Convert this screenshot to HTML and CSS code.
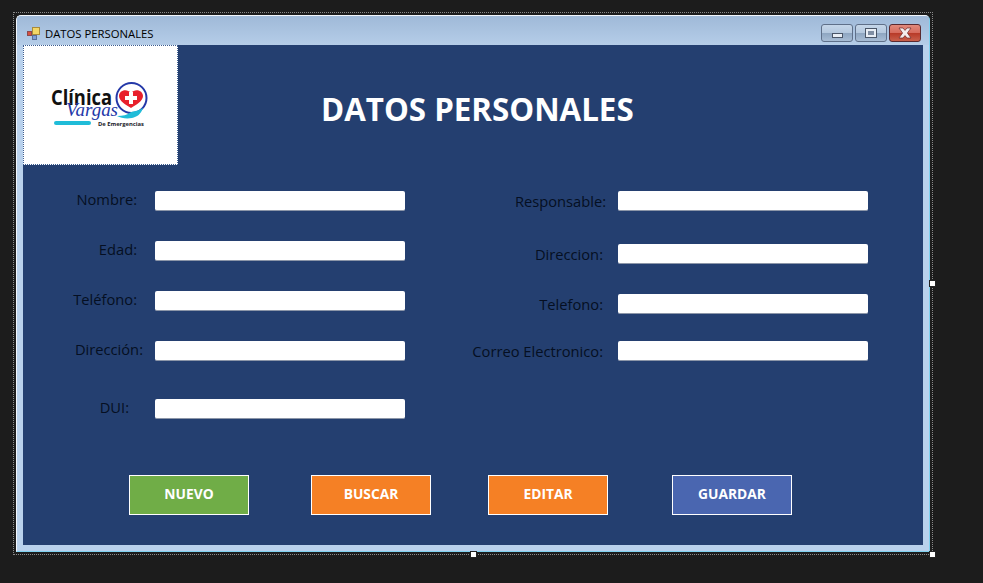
FILE: index.html
```html
<!DOCTYPE html>
<html lang="es">
<head>
  <meta charset="UTF-8">
  <title>DATOS PERSONALES</title>
  <link rel="stylesheet" href="styles.css">
</head>
<body>
  <div class="designer">
    <div class="selection">
      <div class="window">
        <div class="titlebar">
          <svg class="app-icon" width="13" height="13" viewBox="0 0 13 13">
            <rect x="0.5" y="4.5" width="4" height="4" fill="#d8503f" stroke="#8a4a50"/>
            <rect x="5.5" y="0.5" width="7" height="7" fill="#f3d768" stroke="#a98a3a"/>
            <rect x="5.5" y="8.5" width="4" height="4" fill="#7f9fd8" stroke="#5a6f9a"/>
          </svg>
          <span class="title-text">DATOS PERSONALES</span>
          <div class="win-buttons">
            <div class="win-btn"><span class="min-glyph"></span></div>
            <div class="win-btn"><span class="max-glyph"></span></div>
            <div class="win-btn close">
              <svg width="16" height="12" viewBox="0 0 16 12">
                <path d="M2 1h4l2 2.4L10 1h4l-3.6 5L14 11h-4L8 8.6 6 11H2l3.6-5z" fill="#f4eeee" stroke="#6b2a2a" stroke-width="0.7"/>
              </svg>
            </div>
          </div>
        </div>

        <div class="client">
          <div class="top">
            <div class="logo">
              <svg width="153" height="118" viewBox="1 1 153 118">
                <text class="logo-clinica" x="28" y="60" textLength="61" lengthAdjust="spacingAndGlyphs">Clínica</text>
                <circle cx="108.5" cy="53" r="15" fill="#fff" stroke="#2438a8" stroke-width="2"/>
                <path d="M108 63c-5-3-12-7-12-12 0-6 8-8 12-3 4-5 12-3 12 3 0 5-7 9-12 12z" fill="#e8202c"/>
                <path d="M106 47h4v4h4v4h-4v4h-4v-4h-4v-4h4z" fill="#fff"/>
                <text class="logo-vargas" x="43" y="71" textLength="52" lengthAdjust="spacingAndGlyphs">Vargas</text>
                <path d="M94 71c6 0 10-1 14-4 5-1 9-2 12-4-2 6-6 9-11 10-6 1-11 0-15-2z" fill="#20bcd8"/>
                <rect x="31" y="76" width="37" height="4" rx="2" fill="#20bcd8"/>
                <text class="logo-sub" x="75" y="81">De Emergencias</text>
              </svg>
            </div>
            <h1 class="heading">DATOS PERSONALES</h1>
          </div>

          <div class="form">
            <div class="column">
              <div class="field"><label>Nombre:</label><div class="input"></div></div>
              <div class="field gap-30"><label>Edad:</label><div class="input"></div></div>
              <div class="field gap-30"><label>Teléfono:</label><div class="input"></div></div>
              <div class="field gap-30"><label class="tight">Dirección:</label><div class="input"></div></div>
              <div class="field gap-38"><label class="dui">DUI:</label><div class="input"></div></div>
            </div>
            <div class="column right">
              <div class="field"><label class="tight">Responsable:</label><div class="input"></div></div>
              <div class="field gap-33"><label>Direccion:</label><div class="input"></div></div>
              <div class="field gap-30"><label>Telefono:</label><div class="input"></div></div>
              <div class="field gap-27"><label>Correo Electronico:</label><div class="input"></div></div>
            </div>
          </div>

          <div class="actions">
            <button class="btn green">NUEVO</button>
            <button class="btn orange buscar">BUSCAR</button>
            <button class="btn orange editar">EDITAR</button>
            <button class="btn blue guardar">GUARDAR</button>
          </div>
        </div>
      </div>
    </div>
    <span class="handle handle-right"></span>
    <span class="handle handle-bottom"></span>
    <span class="handle handle-corner"></span>
  </div>
</body>
</html>
```

FILE: styles.css
```css
body {
  margin: 0;
  background: #1c1c1c;
  font-family: "Open Sans", "Noto Sans", sans-serif;
  overflow: hidden;
}

.designer {
  position: relative;
  width: 983px;
  height: 583px;
  padding: 12px 0 0 13px;
  box-sizing: border-box;
}

.selection {
  width: 920px;
  height: 543px;
  box-sizing: border-box;
  border: 1px dotted #8a8a8a;
  padding: 2px;
}

.window {
  width: 914px;
  height: 537px;
  box-sizing: border-box;
  background: #b9d1ec;
  border: 1px solid #7fd0ee;
  border-top-color: #f2f6fb;
  border-left-color: #f2f6fb;
  border-radius: 5px 5px 0 0;
}

.titlebar {
  display: flex;
  align-items: center;
  height: 29px;
  padding: 5px 8px 0 10px;
  box-sizing: border-box;
  background: linear-gradient(to bottom, #9fb9d8, #b5cde8);
  border-radius: 4px 4px 0 0;
}

.app-icon {
  margin-right: 5px;
}

.title-text {
  font-size: 11.3px;
  color: #000;
}

.win-buttons {
  display: flex;
  gap: 2px;
  margin-left: auto;
}

.win-btn {
  display: flex;
  align-items: center;
  justify-content: center;
  width: 32px;
  height: 18px;
  box-sizing: border-box;
  border: 1px solid #5f7089;
  border-radius: 3px;
  background: linear-gradient(to bottom, #c5d6e9 0, #b4c8de 50%, #8ea6c1 52%, #a8bdd5 100%);
}

.win-btn.close {
  border-color: #5a2a30;
  background: linear-gradient(to bottom, #e08a7c 0, #d66a5c 50%, #b83a28 52%, #c8604c 100%);
}

.min-glyph {
  width: 9px;
  height: 3px;
  margin-top: 5px;
  background: #e8eef5;
  border: 1px solid #4a5668;
}

.max-glyph {
  width: 6px;
  height: 4px;
  border: 2px solid #e8eef5;
  outline: 1px solid #4a5668;
  background: #7f8ea3;
}

.client {
  width: 900px;
  height: 500px;
  margin-left: 6px;
  background: #243f70;
}

.top {
  display: flex;
  height: 146px;
}

.logo {
  width: 155px;
  height: 120px;
  flex: none;
  box-sizing: border-box;
  border: 1px dotted #3c5d90;
  background: #fff;
}

.logo svg {
  display: block;
}

.logo-clinica {
  font: bold 21px "Open Sans", sans-serif;
  fill: #111;
}

.logo-vargas {
  font: italic 19px "Liberation Serif", serif;
  fill: #2438a8;
}

.logo-sub {
  font: bold 5.8px "Open Sans", sans-serif;
  fill: #1a1a2a;
}

.heading {
  margin: 43px 0 0 143px;
  font-size: 31.3px;
  line-height: 42px;
  font-weight: 700;
  color: #fff;
  white-space: nowrap;
}

.form {
  display: flex;
  height: 284px;
}

.column {
  width: 382px;
}

.column.right {
  width: 468px;
  padding-left: 31px;
  box-sizing: border-box;
}

.field {
  display: flex;
  align-items: center;
  height: 20px;
}

.gap-27 { margin-top: 27px; }
.gap-30 { margin-top: 30px; }
.gap-33 { margin-top: 33px; }
.gap-38 { margin-top: 38px; }

.field label {
  width: 132px;
  flex: none;
  box-sizing: border-box;
  padding: 0 18px 4px 0;
  text-align: right;
  font-size: 14.7px;
  line-height: 20px;
  color: #050f22;
  white-space: nowrap;
}

.field label.tight {
  padding-right: 12px;
}

.field label.dui {
  padding-right: 26px;
}

.right .field label {
  width: 182px;
  padding: 0 15px 0 0;
}

.right .field label.tight {
  padding-right: 12px;
}

.input {
  width: 250px;
  height: 20px;
  box-sizing: border-box;
  background: #fff;
  border-radius: 2px;
  border-bottom: 1px solid #8c96a8;
}

.actions {
  display: flex;
  padding-left: 106px;
}

.btn {
  width: 120px;
  height: 40px;
  padding: 0 0 3px;
  border: 1px solid #fff;
  border-radius: 0;
  font-family: "Open Sans", sans-serif;
  font-size: 13.8px;
  font-weight: 700;
  color: #fff;
}

.green { background: #70ad47; }
.orange { background: #f58025; }
.blue { background: #4a66b0; }

.buscar { margin-left: 62px; }
.editar { margin-left: 57px; }
.guardar { margin-left: 64px; }

.handle {
  position: absolute;
  width: 5px;
  height: 5px;
  background: #fff;
  border: 1px solid #222;
}

.handle-right { left: 929px; top: 280px; }
.handle-bottom { left: 470px; top: 551px; }
.handle-corner { left: 929px; top: 551px; }
```
